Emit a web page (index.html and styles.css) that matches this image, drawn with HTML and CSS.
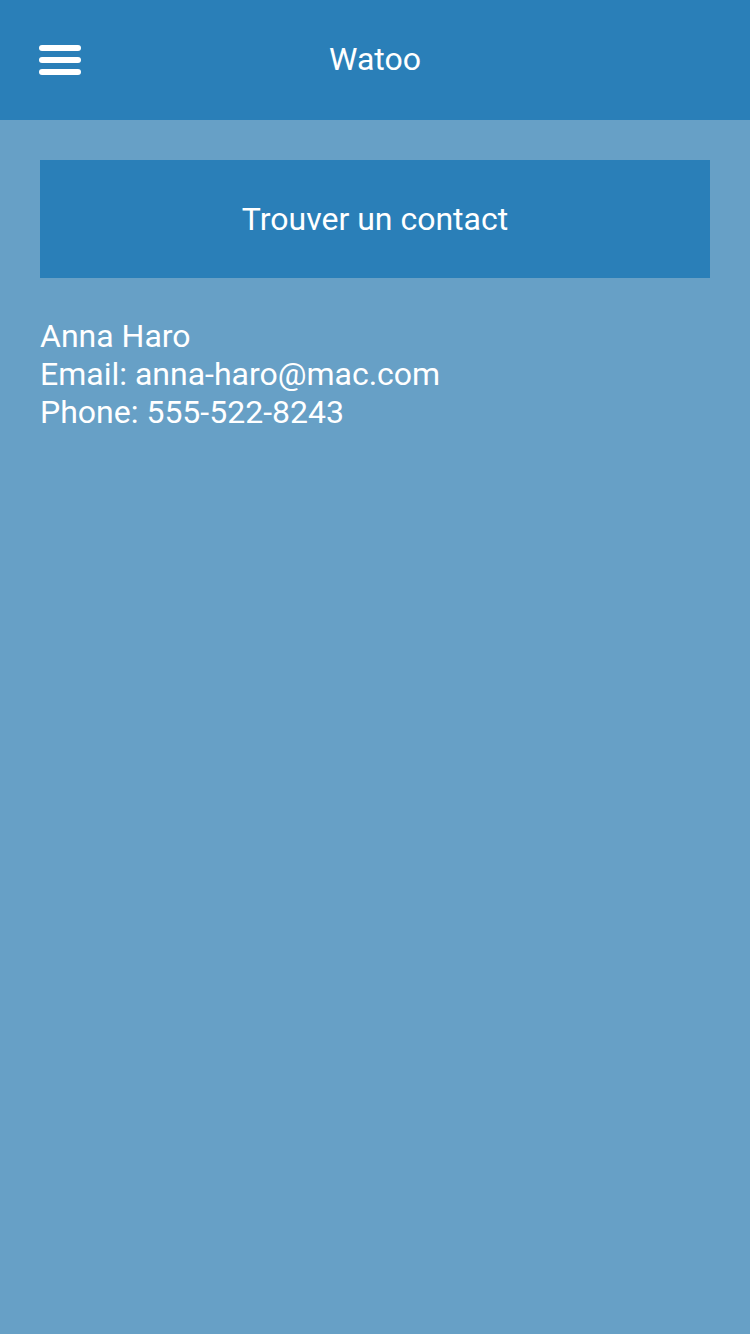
FILE: index.html
```html
<!DOCTYPE html>
<html lang="fr">
<head>
<meta charset="utf-8">
<title>Watoo</title>
<link rel="stylesheet" href="styles.css">
</head>
<body>
<header class="topbar">
  <button class="menu-btn" aria-label="Menu">
    <svg width="42" height="30" viewBox="0 0 42 30">
      <rect x="0" y="0" width="42" height="6" rx="3" fill="#fff"/>
      <rect x="0" y="12" width="42" height="6" rx="3" fill="#fff"/>
      <rect x="0" y="24" width="42" height="6" rx="3" fill="#fff"/>
    </svg>
  </button>
  <h1 class="title">Watoo</h1>
</header>
<main class="content">
  <button class="find-btn">Trouver un contact</button>
  <div class="contact">
    <div>Anna Haro</div>
    <div>Email: anna-haro@mac.com</div>
    <div>Phone: 555-522-8243</div>
  </div>
</main>
</body>
</html>
```
FILE: styles.css
```css
html, body {
  margin: 0;
  padding: 0;
}
body {
  background: #67a0c6;
  font-family: Roboto, "Noto Sans", sans-serif;
  color: #fff;
  min-height: 1334px;
}
.topbar {
  height: 120px;
  background: #2a7fb8;
  display: flex;
  align-items: center;
  justify-content: center;
  position: relative;
}
.menu-btn {
  position: absolute;
  left: 39px;
  top: 45px;
  padding: 0;
  border: 0;
  background: none;
  display: block;
  line-height: 0;
}
.title {
  margin: 0 0 3px;
  font-size: 32px;
  line-height: 38px;
  font-weight: 400;
}
.content {
  padding: 40px 40px;
}
.find-btn {
  display: block;
  width: 100%;
  height: 118px;
  border: 0;
  background: #2a7fb8;
  color: #fff;
  font-family: Roboto, "Noto Sans", sans-serif;
  font-size: 32px;
  padding: 0;
}
.contact {
  margin-top: 39px;
  font-size: 32px;
  line-height: 38px;
}
```
